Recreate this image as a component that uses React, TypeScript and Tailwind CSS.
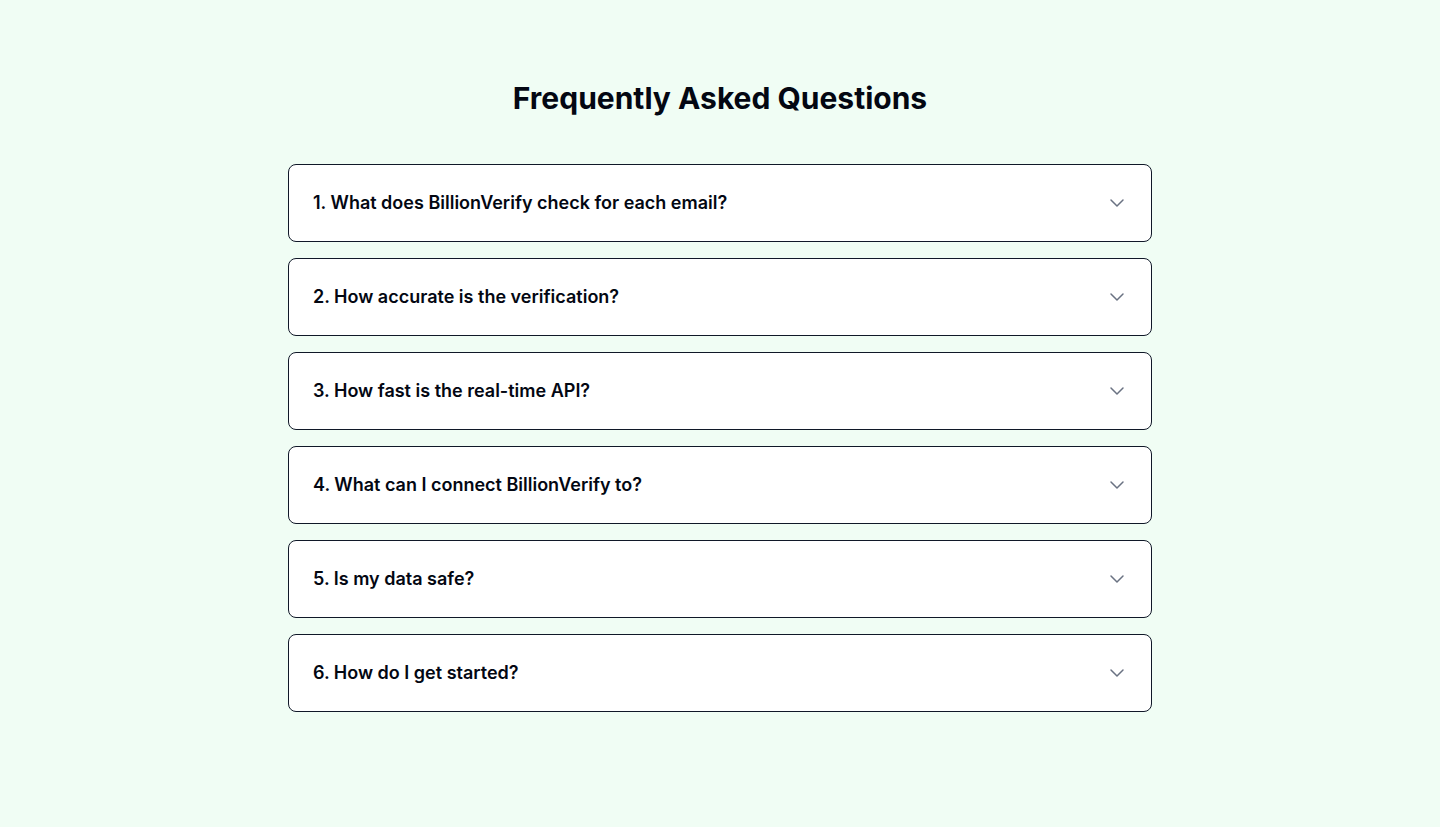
import { useState } from "react";
import { ChevronDown } from "lucide-react";

const questions = [
  {
    q: "1. What does BillionVerify check for each email?",
    a: "We check syntax, domain and MX records, SMTP mailbox existence, disposable and role-based addresses, and catch-all domains.",
  },
  {
    q: "2. How accurate is the verification?",
    a: "Our multi-step verification delivers 99%+ accuracy on deliverable and undeliverable results.",
  },
  {
    q: "3. How fast is the real-time API?",
    a: "Most single-email requests return in under a second.",
  },
  {
    q: "4. What can I connect BillionVerify to?",
    a: "Use our REST API, bulk CSV uploads, or integrations with popular CRMs and email platforms.",
  },
  {
    q: "5. Is my data safe?",
    a: "Uploaded lists are encrypted in transit and at rest, and deleted automatically after processing.",
  },
  {
    q: "6. How do I get started?",
    a: "Create a free account and verify your first emails with the included free credits.",
  },
];

function FaqItem({ q, a }: { q: string; a: string }) {
  const [open, setOpen] = useState(false);

  return (
    <div className="bg-white border border-gray-900 rounded-lg">
      <button
        type="button"
        onClick={() => setOpen(o => !o)}
        className="w-full flex items-center justify-between pl-6 pr-[22px] py-6 text-left"
      >
        <span className="text-lg leading-7 font-semibold text-gray-950">{q}</span>
        <ChevronDown
          size={24}
          strokeWidth={1.5}
          className={`text-gray-500 transition-transform ${open ? "rotate-180" : ""}`}
        />
      </button>
      {open && (
        <p className="px-6 pb-6 -mt-2 text-base text-gray-600 leading-relaxed">{a}</p>
      )}
    </div>
  );
}

export default function App() {
  return (
    <div
      className="min-h-screen bg-[#f0fdf4] py-20"
      style={{ fontFamily: "Inter, 'Noto Sans', sans-serif" }}
    >
      <div className="max-w-4xl mx-auto px-4">
        <h2 className="text-3xl leading-9 font-bold text-center text-gray-950 mb-12">
          Frequently Asked Questions
        </h2>
        <div className="flex flex-col gap-4">
          {questions.map(item => (
            <FaqItem key={item.q} q={item.q} a={item.a} />
          ))}
        </div>
      </div>
    </div>
  );
}
